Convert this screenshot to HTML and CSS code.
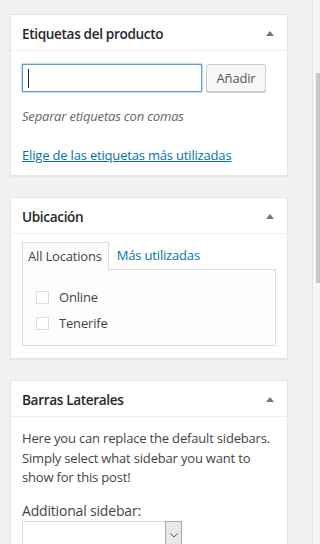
FILE: index.html
```html
<!DOCTYPE html>
<html lang="es">
<head>
<meta charset="utf-8">
<title>Metaboxes</title>
<link rel="stylesheet" href="styles.css">
</head>
<body>
<div class="column">
  <section class="box">
    <header class="box-head">
      <h2 class="box-title">Etiquetas del producto</h2>
      <span class="toggle"></span>
    </header>
    <div class="box-body tags">
      <div class="tag-row">
        <div class="fake-input"><span class="caret"></span></div>
        <button class="btn" type="button">Añadir</button>
      </div>
      <p class="howto">Separar etiquetas con comas</p>
      <p class="cloud"><a href="#" class="link-u">Elige de las etiquetas más utilizadas</a></p>
    </div>
  </section>

  <section class="box">
    <header class="box-head">
      <h2 class="box-title">Ubicación</h2>
      <span class="toggle"></span>
    </header>
    <div class="box-body loc">
      <ul class="tabs">
        <li class="tab active">All Locations</li>
        <li class="tab"><a href="#">Más utilizadas</a></li>
      </ul>
      <div class="tab-panel">
        <ul class="checks">
          <li class="check"><span class="cb"></span>Online</li>
          <li class="check"><span class="cb"></span>Tenerife</li>
        </ul>
      </div>
    </div>
  </section>

  <section class="box">
    <header class="box-head">
      <h2 class="box-title">Barras Laterales</h2>
      <span class="toggle"></span>
    </header>
    <div class="box-body side">
      <p class="intro">Here you can replace the default sidebars. Simply select what sidebar you want to show for this post!</p>
      <p class="label">Additional sidebar:</p>
      <div class="select"><span class="sel-arrow"><svg width="8" height="5" viewBox="0 0 8 5"><path d="M0.5 0.5 L4 4 L7.5 0.5" fill="none" stroke="#555" stroke-width="1"/></svg></span></div>
    </div>
  </section>
</div>
<div class="scrollbar"><div class="thumb"></div></div>
</body>
</html>
```

FILE: styles.css
```css
* { box-sizing: border-box; }
html, body { margin: 0; padding: 0; }
body {
  background: #f1f1f1;
  font-family: "Open Sans", "Noto Sans", sans-serif;
  font-size: 13px;
  letter-spacing: -0.18px;
  color: #444;
  width: 314px;
  height: 544px;
  overflow: hidden;
}
.column {
  padding: 14px 0 0 10px;
  width: 288px;
}
.box {
  background: #fff;
  border: 1px solid #e5e5e5;
  box-shadow: 0 1px 1px rgba(0,0,0,.04);
  margin-bottom: 21px;
}
.box-head {
  height: 36px;
  border-bottom: 1px solid #eee;
  display: flex;
  align-items: center;
  justify-content: space-between;
  padding: 2px 13px 0 11px;
}
.box-title {
  margin: 0;
  font-size: 13.6px;
  font-weight: 600;
  letter-spacing: -0.35px;
  color: #23282d;
  line-height: 19px;
}
.toggle {
  width: 0; height: 0;
  border-left: 4px solid transparent;
  border-right: 4px solid transparent;
  border-bottom: 5px solid #72777c;
}
.box-body { padding: 0 11px; }

.tags { padding-top: 13px; padding-bottom: 10px; }
.tag-row { display: flex; gap: 4px; }
.fake-input {
  width: 180px; height: 28px;
  border: 1px solid #5b9dd9;
  box-shadow: 0 0 2px rgba(30,140,190,.8);
  display: flex; align-items: center;
  padding-left: 5px;
}
.caret { width: 1px; height: 19px; background: #222; }
.btn {
  width: 60px; height: 28px;
  background: #f7f7f7;
  border: 1px solid #ccc;
  border-radius: 3px;
  box-shadow: 0 1px 0 #ccc;
  color: #555;
  font-family: inherit;
  font-size: 13px;
  letter-spacing: inherit;
  padding: 0;
}
.howto {
  margin: 14px 0 0;
  line-height: 20px;
  font-style: italic;
  color: #666;
}
.cloud { margin: 19px 0 0; line-height: 20px; }
.link-u { color: #0073aa; text-decoration: underline; }

.loc { padding-top: 8px; padding-bottom: 12px; }
.tabs { list-style: none; margin: 0; padding: 0; display: flex; align-items: flex-end; }
.tab { line-height: 27px; padding: 0 6px 0 5px; }
.tab a { color: #0073aa; text-decoration: none; padding-left: 3px; }
.tab.active {
  border: 1px solid #ddd;
  border-bottom: none;
  background: #fdfdfd;
  margin-bottom: -1px;
  position: relative;
  z-index: 1;
}
.tab-panel {
  border: 1px solid #ddd;
  background: #fdfdfd;
  padding: 14px 13px 9px;
}
.checks { list-style: none; margin: 0; padding: 0; }
.check { display: flex; align-items: center; line-height: 26px; }
.cb {
  width: 13px; height: 13px;
  border: 1px solid #ddd;
  background: #fff;
  margin-right: 10px;
}

.side { padding-top: 12px; }
.intro { margin: 0; line-height: 19.5px; }
.label { margin: 13px 0 0; font-size: 14px; line-height: 20px; }
.select {
  margin-top: 0;
  width: 160px; height: 30px;
  border: 1px solid #ddd;
  border-right: none;
  display: flex; justify-content: flex-end;
}
.sel-arrow {
  width: 17px; height: 100%;
  background: #e8e8e8;
  border: 1px solid #aaa;
  margin-top: -1px;
  display: flex; justify-content: center; padding-top: 11px;
}

.scrollbar {
  position: fixed; top: 0; right: 0;
  width: 8px; height: 544px;
  background: #f5f5f5;
  border-left: 1px solid #e6e6e6;
}
.thumb {
  position: absolute; right: 0; top: 73px;
  width: 4px; height: 210px;
  background: #c8c8c8;
}
```
